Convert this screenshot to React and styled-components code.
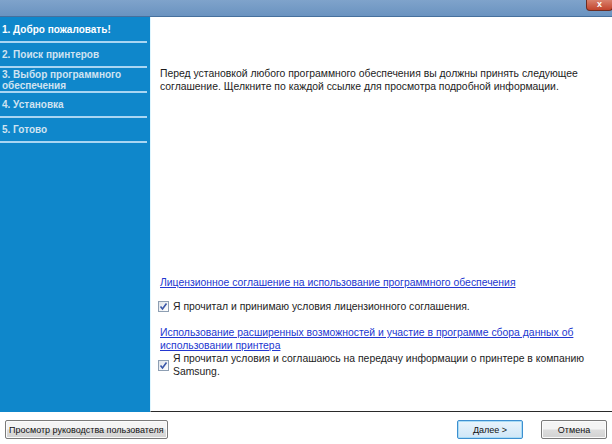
import React from "react";
import styled, { createGlobalStyle } from "styled-components";

const STEPS = [
  "1. Добро пожаловать!",
  "2. Поиск принтеров",
  "3. Выбор программного обеспечения",
  "4. Установка",
  "5. Готово",
];

const GlobalStyle = createGlobalStyle`
  html, body {
    margin: 0;
    padding: 0;
    overflow: hidden;
    background: #ffffff;
  }
  * {
    box-sizing: border-box;
  }
`;

const Window = styled.div`
  width: 612px;
  height: 444px;
  display: flex;
  flex-direction: column;
  font-family: "Liberation Sans", sans-serif;
  background: #ffffff;
`;

const TitleBar = styled.div`
  height: 17px;
  flex: none;
  display: flex;
  justify-content: flex-end;
  align-items: flex-start;
  background: linear-gradient(#7fa3cb, #6a93c0);
  border-bottom: 1px solid #46709d;
`;

const CloseButton = styled.div`
  width: 27px;
  height: 11px;
  margin-right: -1px;
  border: 1px solid #6c2d22;
  border-top: none;
  border-radius: 0 0 4px 4px;
  background: linear-gradient(#d9816d, #c2442c);
  color: #ffffff;
  font: bold 9px/9px "Liberation Sans", sans-serif;
  text-align: center;
`;

const Body = styled.div`
  height: 395px;
  flex: none;
  display: flex;
`;

const Sidebar = styled.div`
  width: 150px;
  flex: none;
  background: #0f87cb;
  padding-top: 1px;
`;

const Step = styled.div`
  width: 147px;
  height: 25px;
  padding: 0 0 0 2px;
  display: flex;
  align-items: center;
  border-bottom: 2px solid #a9d6f3;
  color: ${(p) => (p.$active ? "#ffffff" : "#cfe3f1")};
  font-family: "Liberation Sans", sans-serif;
  font-weight: bold;
  font-size: 10px;
  line-height: 11px;
`;

const Content = styled.div`
  flex: 1;
  display: flex;
  flex-direction: column;
  padding: 50px 8px 0 9px;
  border-left: 1px solid #dff6ff;
  border-bottom: 1px solid #2a2a2a;
  font-size: 10.4px;
  line-height: 13px;
  color: #1c1c1c;
`;

const Intro = styled.p`
  margin: 0;
  flex: 1;
`;

const Link = styled.a`
  color: #2337d0;
  text-decoration: underline;
  cursor: pointer;
  margin-bottom: ${(p) => p.$gap}px;
`;

const CheckRow = styled.label`
  display: flex;
  align-items: center;
  gap: 4px;
  margin-bottom: ${(p) => p.$gap}px;
`;

const Box = styled.span`
  width: 11px;
  height: 11px;
  flex: none;
  margin-left: -2px;
  border: 1px solid #8e9fb3;
  background: linear-gradient(135deg, #dfe4ea, #ffffff);
  display: flex;
  align-items: center;
  justify-content: center;
`;

const Footer = styled.div`
  flex: 1;
  display: flex;
  align-items: flex-start;
  padding: 8px 5px 0 5px;
`;

const Button = styled.button`
  height: 19px;
  padding: 0 3px;
  min-width: 66px;
  border: 1px solid ${(p) => (p.$focused ? "#3d8fd0" : "#7a7a7a")};
  border-radius: 2px;
  background: ${(p) =>
    p.$focused
      ? "linear-gradient(#e9f4fc, #cfe6f7)"
      : "linear-gradient(#f4f4f4 45%, #dcdcdc 55%, #d2d2d2)"};
  box-shadow: inset 0 0 0 1px ${(p) => (p.$focused ? "#a9dcf6" : "#fbfbfb")};
  font-family: "Liberation Sans", sans-serif;
  font-size: 9px;
  color: #111;
  margin-left: ${(p) => p.$offset || 0}px;
`;

const Spacer = styled.div`
  flex: 1;
`;

const Check = () => (
  <Box>
    <svg width="9" height="9" viewBox="0 0 9 9">
      <path d="M1.5 4.5 L3.5 7 L7.5 1.5" fill="none" stroke="#3a57a8" strokeWidth="1.6" />
    </svg>
  </Box>
);

export default function App() {
  return (
    <>
      <GlobalStyle />
      <Window>
        <TitleBar>
          <CloseButton>x</CloseButton>
        </TitleBar>
        <Body>
          <Sidebar>
            {STEPS.map((s, i) => (
              <Step key={s} $active={i === 0}>
                {s}
              </Step>
            ))}
          </Sidebar>
          <Content>
            <Intro>
              Перед установкой любого программного обеспечения вы должны принять следующее
              соглашение. Щелкните по каждой ссылке для просмотра подробной информации.
            </Intro>
            <Link $gap={11}>Лицензионное соглашение на использование программного обеспечения</Link>
            <CheckRow $gap={13}>
              <Check />
              <span>Я прочитал и принимаю условия лицензионного соглашения.</span>
            </CheckRow>
            <Link $gap={0}>
              Использование расширенных возможностей и участие в программе сбора данных об
              использовании принтера
            </Link>
            <CheckRow $gap={33}>
              <Check />
              <span>
                Я прочитал условия и соглашаюсь на передачу информации о принтере в компанию
                Samsung.
              </span>
            </CheckRow>
          </Content>
        </Body>
        <Footer>
          <Button>Просмотр руководства пользователя</Button>
          <Spacer />
          <Button $focused>Далее &gt;</Button>
          <Button $offset={18}>Отмена</Button>
        </Footer>
      </Window>
    </>
  );
}
